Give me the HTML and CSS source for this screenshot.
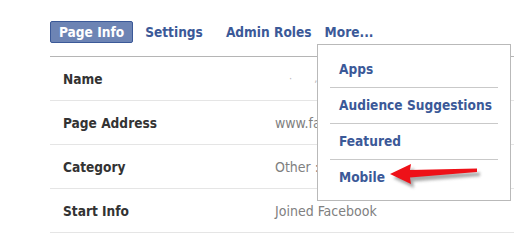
FILE: index.html
```html
<!DOCTYPE html>
<html lang="en">

<head>
  <meta charset="UTF-8">
  <title>Page Info</title>
  <link rel="stylesheet" href="styles.css">
</head>

<body>
  <div class="panel">
    <div class="tabs">
      <a class="tab active" href="#">Page Info</a>
      <a class="tab settings" href="#">Settings</a>
      <a class="tab admin" href="#">Admin Roles</a>
      <a class="tab more" href="#">More...</a>
    </div>
    <div class="rows">
      <div class="row">
        <div class="label">Name</div>
        <div class="value blur">· &nbsp; &nbsp; &nbsp; ,</div>
      </div>
      <div class="row">
        <div class="label">Page Address</div>
        <div class="value">www.facebook.com/</div>
      </div>
      <div class="row">
        <div class="label">Category</div>
        <div class="value">Other :</div>
      </div>
      <div class="row">
        <div class="label">Start Info</div>
        <div class="value">Joined Facebook</div>
      </div>
    </div>

    <div class="dropdown">
      <a class="menu-item" href="#">Apps</a>
      <a class="menu-item" href="#">Audience Suggestions</a>
      <a class="menu-item" href="#">Featured</a>
      <a class="menu-item" href="#">Mobile</a>
    </div>

    <svg class="arrow" width="110" height="34" viewBox="0 0 110 34">
      <defs>
        <filter id="shadow" x="-20%" y="-50%" width="140%" height="200%">
          <feGaussianBlur stdDeviation="1.8" />
        </filter>
      </defs>
      <g fill="#8a8a8a" opacity="0.75" filter="url(#shadow)" transform="translate(3,4)">
        <path d="M2 14 L23 4 L22 10 L89 8.5 L89 12 L22 17.5 L23 24 Z" />
      </g>
      <path d="M2 14 L23 4 L22 10 L89 8.5 L89 12 L22 17.5 L23 24 Z" fill="#ee1118" />
    </svg>
  </div>
</body>

</html>
```

FILE: styles.css
```css
body {
  margin: 0;
  background-color: #fff;
  font-family: "DejaVu Sans", Tahoma, sans-serif;
  font-size: 13.6px;
}

.panel {
  position: relative;
  width: 514px;
  height: 246px;
  overflow: hidden;
}

.tabs {
  display: flex;
  align-items: flex-start;
  margin: 21px 0 0 50px;
  height: 35px;
  border-bottom: 1px solid #b5b5b5;
}

.tab {
  color: #3b5998;
  font-weight: bold;
  font-stretch: condensed;
  text-decoration: none;
  line-height: 20px;
  border: 1px solid transparent;
}

.tab.active {
  padding: 0 8px;
  background-color: #6d84b4;
  border-color: #3b5998;
  border-radius: 2px;
  color: #fff;
}

.tab.settings {
  margin-left: 11px;
}

.tab.admin {
  margin-left: 21px;
}

.tab.more {
  margin-left: 11px;
}

.rows {
  margin-left: 50px;
}

.row {
  display: flex;
  align-items: center;
  height: 43px;
  border-bottom: 1px solid #e5e5e5;
}

.label {
  width: 212px;
  padding-left: 13px;
  color: #333;
  font-weight: bold;
  font-stretch: condensed;
}

.value {
  color: #808080;
  font-size: 14px;
  font-stretch: condensed;
}

.value.blur {
  color: #b8b8b8;
  padding-left: 14px;
  font-size: 11px;
}

.dropdown {
  position: absolute;
  left: 317px;
  top: 44px;
  padding: 7px 12px 6px 12px;
  box-sizing: border-box;
  width: 194px;
  height: 157px;
  background-color: #fff;
  border: 1px solid #b9b9b9;
  display: flex;
  flex-direction: column;
}

.menu-item {
  display: block;
  height: 35px;
  line-height: 35px;
  padding-left: 9px;
  color: #3b5998;
  font-weight: bold;
  font-stretch: condensed;
  text-decoration: none;
  border-bottom: 1px solid #c9c9c9;
}

.menu-item:last-child {
  border-bottom: none;
}

.arrow {
  position: absolute;
  left: 388px;
  top: 160px;
}
```
